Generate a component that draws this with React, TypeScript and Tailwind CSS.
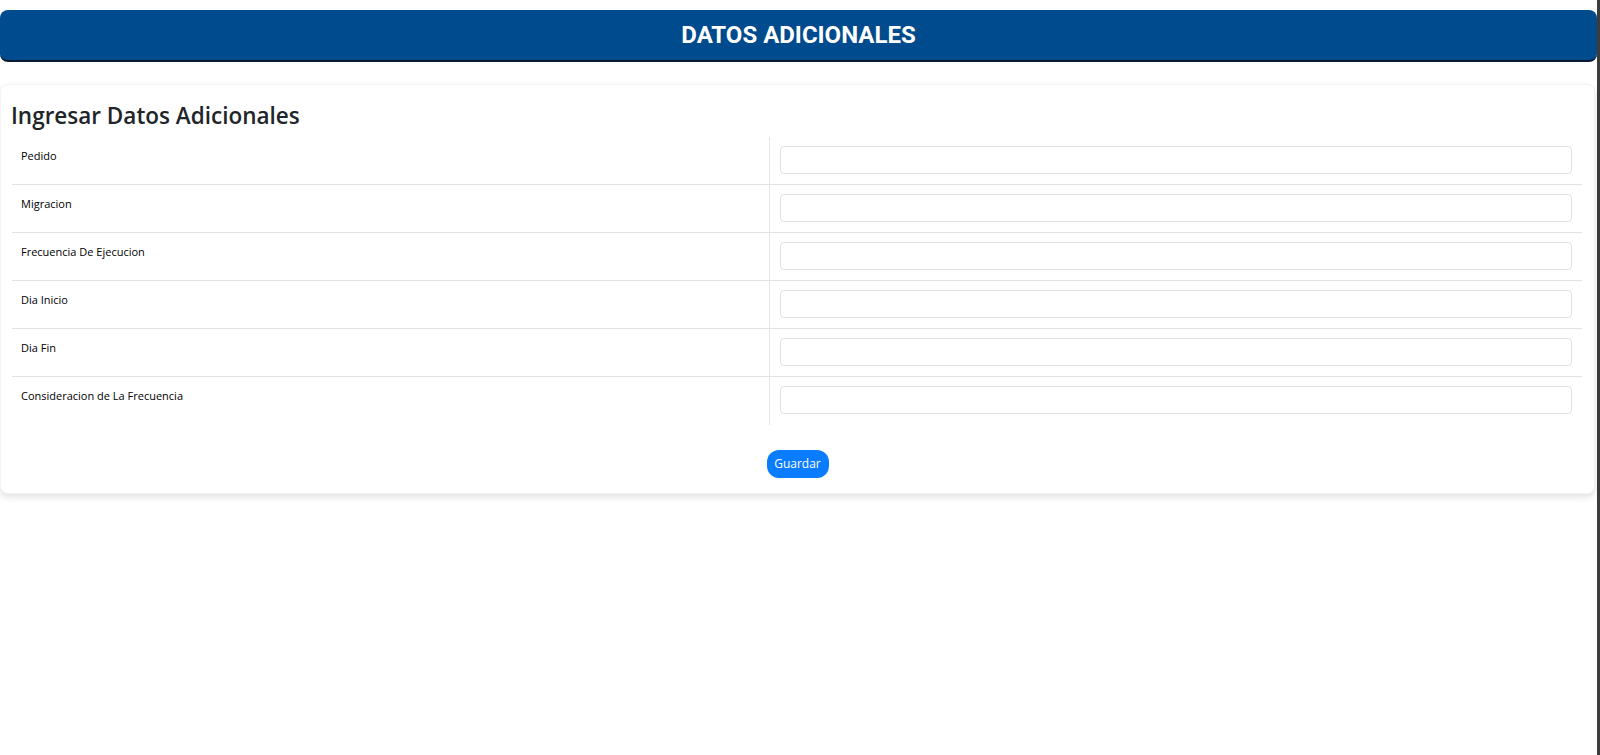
import React from "react";

const FIELDS = [
  "Pedido",
  "Migracion",
  "Frecuencia De Ejecucion",
  "Dia Inicio",
  "Dia Fin",
  "Consideracion de La Frecuencia",
];

export default function App() {
  return (
    <div className="min-h-[755px] bg-white border-r-[3px] border-[#3c3c3c] font-['Open_Sans',sans-serif]">
      <div className="pt-[10px]">
        <div className="flex h-[52px] items-center justify-center rounded-lg border-b-2 border-[#0b1a2e] bg-[#004b8d]">
          <h1 className="font-['Roboto',sans-serif] text-[24px] font-bold text-white">
            DATOS ADICIONALES
          </h1>
        </div>
      </div>

      <div className="mt-[22px] mr-[2px] rounded-lg border border-[#f4f4f4] bg-white pb-[15px] shadow-[0_3px_6px_rgba(0,0,0,0.12)]">
        <h2 className="px-[10px] pt-[17px] text-[22.5px] font-semibold leading-[28px] text-[#212529]">
          Ingresar Datos Adicionales
        </h2>

        <div className="mt-[7px] ml-[11px] mr-[12px]">
          {FIELDS.map((label, i) => (
            <div
              key={label}
              className={`flex h-[48px] ${i < FIELDS.length - 1 ? "border-b border-[#e2e2e2]" : ""}`}
            >
              <div className="w-[758px] border-r border-[#e6e6e6] pl-[9px] pt-[11px] text-[11px] text-black">
                {label}
              </div>
              <div className="flex-1 px-[10px] pt-[9px]">
                <input
                  type="text"
                  className="h-[28px] w-full rounded-[4px] border border-[#e0e0e0] bg-white px-2 text-sm outline-none"
                />
              </div>
            </div>
          ))}
        </div>

        <div className="mt-[25px] flex justify-center">
          <button
            type="button"
            className="h-[28px] w-[62px] rounded-[12px] bg-[#0a7cff] text-[12px] text-white"
          >
            Guardar
          </button>
        </div>
      </div>
    </div>
  );
}
